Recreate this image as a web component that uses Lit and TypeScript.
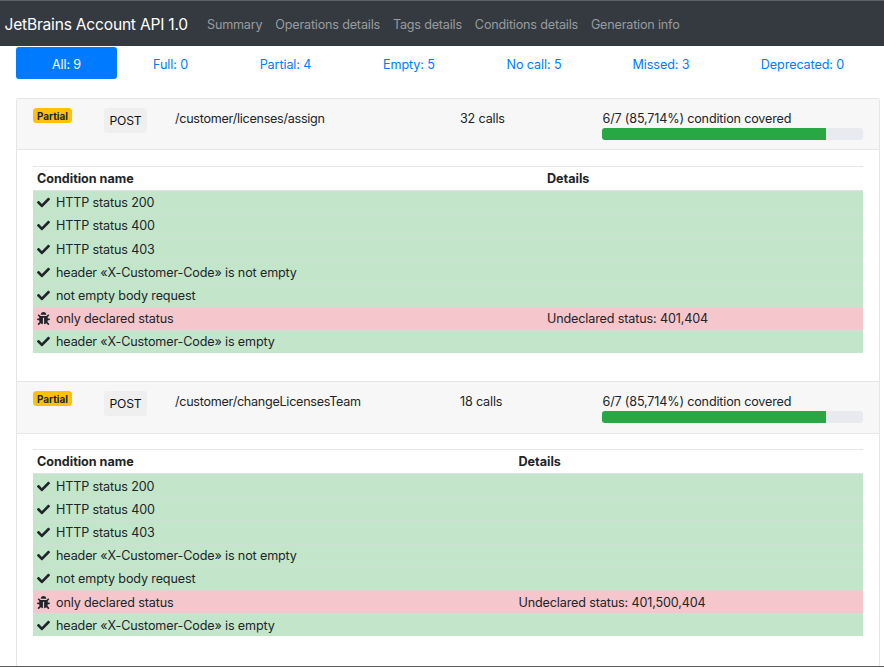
import { LitElement, html, css, svg } from "lit";
import { customElement, property } from "lit/decorators.js";
import { classMap } from "lit/directives/class-map.js";

interface Condition {
  name: string;
  ok: boolean;
  details?: string;
}

interface Operation {
  status: string;
  method: string;
  path: string;
  calls: number;
  covered: number;
  total: number;
  percent: string;
  layout: string;
  conditions: Condition[];
}

const conditionsWith = (undeclared: string): Condition[] => [
  { name: "HTTP status 200", ok: true },
  { name: "HTTP status 400", ok: true },
  { name: "HTTP status 403", ok: true },
  { name: "header «X-Customer-Code» is not empty", ok: true },
  { name: "not empty body request", ok: true },
  { name: "only declared status", ok: false, details: `Undeclared status: ${undeclared}` },
  { name: "header «X-Customer-Code» is empty", ok: true },
];

const OPERATIONS: Operation[] = [
  {
    status: "Partial", method: "POST", path: "/customer/licenses/assign", calls: 32,
    covered: 6, total: 7, percent: "85,714%", layout: "wide", conditions: conditionsWith("401,404"),
  },
  {
    status: "Partial", method: "POST", path: "/customer/changeLicensesTeam", calls: 18,
    covered: 6, total: 7, percent: "85,714%", layout: "narrow", conditions: conditionsWith("401,500,404"),
  },
];

const checkIcon = svg`<path fill="currentColor" d="M173.898 439.404l-166.4-166.4c-9.997-9.997-9.997-26.206 0-36.204l36.203-36.204c9.997-9.998 26.207-9.998 36.204 0L192 312.69 432.095 72.596c9.997-9.997 26.207-9.997 36.204 0l36.203 36.204c9.997 9.997 9.997 26.206 0 36.204l-294.4 294.401c-9.998 9.997-26.207 9.997-36.204-.001z"/>`;
const bugIcon = svg`<path fill="currentColor" d="M511.988 288.9c-.478 17.43-15.217 31.1-32.653 31.1H424v16c0 21.864-4.882 42.584-13.6 61.145l60.228 60.228c12.496 12.497 12.496 32.758 0 45.255-12.498 12.497-32.759 12.496-45.256 0l-54.736-54.736C345.886 467.965 314.351 480 280 480V236c0-6.627-5.373-12-12-12h-24c-6.627 0-12 5.373-12 12v244c-34.351 0-65.886-12.035-90.636-32.108l-54.736 54.736c-12.498 12.497-32.759 12.496-45.256 0-12.496-12.497-12.496-32.758 0-45.255l60.228-60.228C92.882 378.584 88 357.864 88 336v-16H32.666C15.23 320 .491 306.33.013 288.9-.484 270.816 14.028 256 32 256h56v-58.745l-46.628-46.628c-12.496-12.497-12.496-32.758 0-45.255 12.498-12.497 32.758-12.497 45.256 0L141.255 160h229.489l54.627-54.627c12.498-12.497 32.758-12.497 45.256 0 12.496 12.497 12.496 32.758 0 45.255L424 197.255V256h56c17.972 0 32.484 14.816 31.988 32.9zM257 0c-61.856 0-112 50.144-112 112h224C369 50.144 318.856 0 257 0z"/>`;

@customElement("operation-card")
export class OperationCard extends LitElement {
  @property({ attribute: false }) operation!: Operation;

  static styles = css`
    :host { display: block; height: 283.3px; }
    .header {
      display: grid;
      grid-template-columns: 71px 71px 285px 142.5px 261px;
      box-sizing: border-box;
      height: 51.4px;
      padding: 9px 16px 0;
      background: #f7f7f7;
      border-bottom: 1px solid #e6e6e6;
    }
    .badge {
      display: inline-block;
      box-sizing: border-box;
      width: 39px;
      height: 15px;
      border-radius: 3.5px;
      background: #ffc107;
      font-size: 9.9px;
      letter-spacing: 0;
      font-weight: 700;
      line-height: 16px;
      text-align: center;
      vertical-align: top;
    }
    .method {
      box-sizing: border-box;
      width: 43px;
      height: 25px;
      border-radius: 3px;
      background: #efefef;
      color: #111;
      font-size: 12.2px;
      letter-spacing: -0.2px;
      line-height: 25px;
      text-align: center;
    }
    .text { line-height: 20px; padding-top: 1px; letter-spacing: -0.17px; }
    .path { letter-spacing: -0.27px; }
    .progress {
      height: 12px;
      margin: -1px 0 0 -0.5px;
      width: 261px;
      border-radius: 3px;
      background: #e9eaef;
      overflow: hidden;
    }
    .bar { height: 100%; background: #28a745; }
    .body { padding: 15.4px 16px 0; }
    .row {
      display: grid;
      align-items: center;
      box-sizing: border-box;
      height: 23.2px;
      padding: 0 4px 0.2px;
      border-top: 1px solid #cfdfd6;
      background: #c3e6cb;
    }
    .wide .row { grid-template-columns: 510px 1fr; }
    .narrow .row { grid-template-columns: 481.5px 1fr; }
    .row.first { border-top-color: #c3e6cb; }
    .row.bad { background: #f5c6cb; border-top-color: #e4d0d2; }
    .row.head {
      height: 25px;
      padding-bottom: 0;
      background: #fff;
      border-top: 1px solid #e6e8ea;
      border-bottom: 1.5px solid #dee2e6;
      font-weight: 700;
      letter-spacing: -0.02px;
    }
    .name { display: flex; align-items: center; gap: 6.5px; margin-left: -0.5px; }
    .icon { width: 13px; height: 13px; flex: none; }
  `;

  render() {
    const o = this.operation;
    return html`
      <div class="header">
        <div><span class="badge">${o.status}</span></div>
        <div class="method">${o.method}</div>
        <div class="text path">${o.path}</div>
        <div class="text">${o.calls} calls</div>
        <div>
          <div class="text">${o.covered}/${o.total} (${o.percent}) condition covered</div>
          <div class="progress">
            <div class="bar" style="width:${(o.covered / o.total) * 100}%"></div>
          </div>
        </div>
      </div>
      <div class="body ${o.layout}">
        <div class="row head"><span>Condition name</span><span>Details</span></div>
        ${o.conditions.map((c, i) => html`
          <div class=${classMap({ row: true, bad: !c.ok, first: i === 0 })}>
            <span class="name">
              <svg class="icon" viewBox="0 0 512 512">${c.ok ? checkIcon : bugIcon}</svg>
              <span>${c.name}</span>
            </span>
            <span>${c.details ?? ""}</span>
          </div>`)}
      </div>
    `;
  }
}

@customElement("app-root")
export class AppRoot extends LitElement {
  static styles = css`
    :host {
      display: flex;
      flex-direction: column;
      box-sizing: border-box;
      height: 667px;
      overflow: hidden;
      background: #fff;
      border-bottom: 1.5px solid #5c5c5c;
      color: #212529;
      font-family: Inter, "Liberation Sans", sans-serif;
      font-size: 12.6px;
      letter-spacing: -0.14px;
      line-height: 19px;
    }
    .navbar {
      display: flex;
      align-items: center;
      flex: none;
      box-sizing: border-box;
      height: 46px;
      padding: 2px 0 0 4.5px;
      border-top: 1px solid #5d6064;
      background: #343a40;
      white-space: nowrap;
    }
    .brand { width: 202.5px; color: #fff; font-size: 15.6px; letter-spacing: -0.22px; }
    .links { display: flex; gap: 12.9px; color: #999c9f; letter-spacing: -0.18px; }
    .pills {
      display: grid;
      grid-template-columns: 101px 107px 123px 124px 126px 128px 155px;
      flex: none;
      margin: 1px 4px 0 16px;
      color: #007bff;
      text-align: center;
      letter-spacing: -0.1px;
    }
    .pill { height: 32px; line-height: 35px; border-radius: 3px; }
    .pill.active { background: #007bff; color: #fff; }
    .cards {
      flex: 1;
      margin: 19px 4px 0 16px;
      border: 1px solid #e6e6e6;
      border-bottom: 0;
      border-radius: 3px 3px 0 0;
    }
    .card + .card { box-shadow: 0 -1px #e6e6e6; }
  `;

  render() {
    const links = ["Summary", "Operations details", "Tags details", "Conditions details", "Generation info"];
    const filters = ["All: 9", "Full: 0", "Partial: 4", "Empty: 5", "No call: 5", "Missed: 3", "Deprecated: 0"];
    return html`
      <nav class="navbar">
        <span class="brand">JetBrains Account API 1.0</span>
        <div class="links">${links.map((l) => html`<span>${l}</span>`)}</div>
      </nav>
      <div class="pills">
        ${filters.map((f, i) => html`<span class=${classMap({ pill: true, active: i === 0 })}>${f}</span>`)}
      </div>
      <main class="cards">
        ${OPERATIONS.map((o) => html`<operation-card class="card" .operation=${o}></operation-card>`)}
      </main>
    `;
  }
}
